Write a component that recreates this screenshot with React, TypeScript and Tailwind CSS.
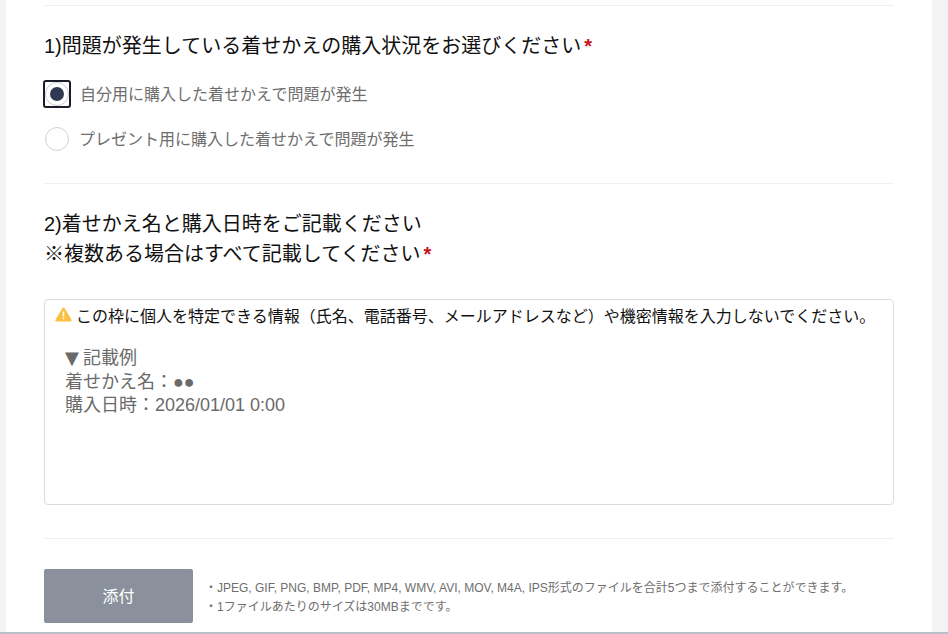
export default function App() {
  return (
    <div className="h-[634px] w-[948px] overflow-hidden bg-[#f2f3f4] font-['Liberation_Sans','Noto_Sans_CJK_JP',sans-serif]">
      <div className="ml-[6px] h-[632px] w-[926px] bg-white px-[38px] pt-[5px]">
        <div className="h-px bg-[#f0f0f0]" />
        <h2 className="mt-[25px] text-[20px] leading-[30px] text-[#111]">
          1)問題が発生している着せかえの購入状況をお選びください<span className="ml-[3px] font-bold text-[#c8101c]">*</span>
        </h2>
        <div className="mt-[19px] flex h-[27px] items-center">
          <span className="-ml-[1px] flex h-[28px] w-[28px] items-center justify-center rounded-[3px] border-2 border-[#1a1d29]">
            <span className="flex h-[24px] w-[24px] items-center justify-center rounded-full border border-[#c9cbd1] bg-white">
              <span className="h-[14px] w-[14px] rounded-full bg-[#2f3a52]" />
            </span>
          </span>
          <span className="ml-[9px] pt-[2px] text-[16px] text-[#6e6e6e]">自分用に購入した着せかえで問題が発生</span>
        </div>
        <div className="mt-[18px] flex h-[27px] items-center">
          <span className="ml-[1px] h-[24px] w-[24px] rounded-full border border-[#d0d1d5] bg-white" />
          <span className="ml-[10px] pt-[2px] text-[16px] text-[#6e6e6e]">プレゼント用に購入した着せかえで問題が発生</span>
        </div>
        <div className="mt-[31px] h-px bg-[#f0f0f0]" />
        <h2 className="mt-[25px] text-[20px] leading-[30px] text-[#111]">
          2)着せかえ名と購入日時をご記載ください
          <br />
          ※複数ある場合はすべて記載してください<span className="ml-[3px] font-bold text-[#c8101c]">*</span>
        </h2>
        <div className="mt-[30px] h-[206px] rounded-[4px] border border-[#dcdcdc] bg-white">
          <div className="mt-[5px] ml-[10px] flex items-center text-[16px] leading-[24px] text-[#111]">
            <svg width="17" height="15" viewBox="0 0 17 15" className="mr-[4px] mb-[5px] shrink-0">
              <path d="M8.5 0.5c.5 0 .9.3 1.2.8l6.8 11.4c.5.9-.1 1.8-1.1 1.8H1.6c-1 0-1.6-.9-1.1-1.8L7.3 1.3c.3-.5.7-.8 1.2-.8z" fill="#fdbf3f" />
              <rect x="7.7" y="4.5" width="1.6" height="5" fill="#fff" />
              <rect x="7.7" y="10.6" width="1.6" height="1.6" fill="#fff" />
            </svg>
            この枠に個人を特定できる情報（氏名、電話番号、メールアドレスなど）や機密情報を入力しないでください。
          </div>
          <div className="mt-[17px] ml-[20px] text-[18px] leading-[23.5px] text-[#6a6a6a]">
            <span className="inline-block w-[18px] font-['DejaVu_Sans']">▼</span>記載例
            <br />
            着せかえ名：●●
            <br />
            購入日時：2026/01/01 0:00
          </div>
        </div>
        <div className="mt-[33px] h-px bg-[#f0f0f0]" />
        <div className="mt-[30px] flex items-center">
          <button className="flex h-[54px] w-[149px] items-center justify-center rounded-[2px] bg-[#8a919d] pt-[2px] text-[16px] font-normal text-white">
            添付
          </button>
          <div className="ml-[12px] pt-[4px] text-[12px] leading-[19.5px] text-[#6e6e6e]">
            <p>・JPEG, GIF, PNG, BMP, PDF, MP4, WMV, AVI, MOV, M4A, IPS形式のファイルを合計5つまで添付することができます。</p>
            <p>・1ファイルあたりのサイズは30MBまでです。</p>
          </div>
        </div>
      </div>
      <div className="h-[2px] bg-[#b8c0cc]" />
    </div>
  );
}
